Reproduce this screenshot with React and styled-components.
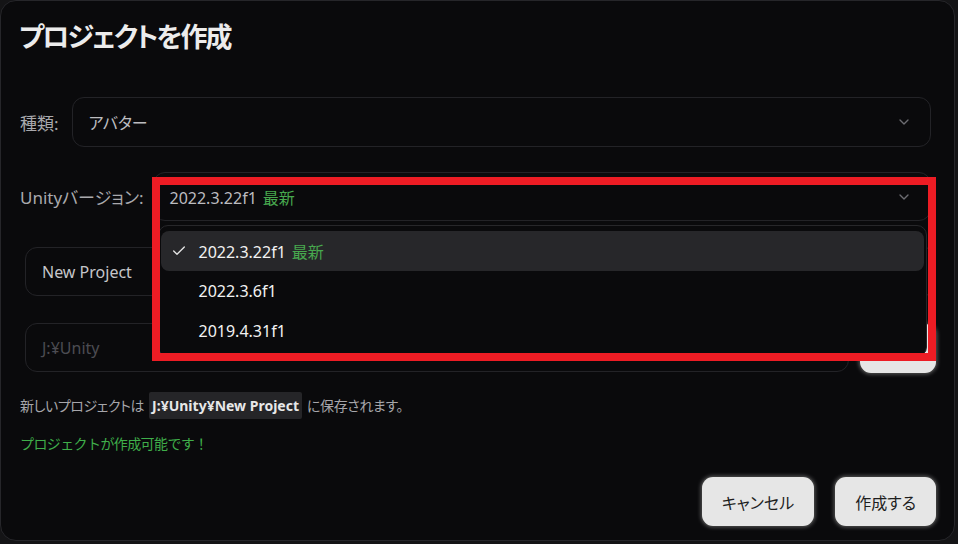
import React from 'react';
import styled, { createGlobalStyle } from 'styled-components';
import { ChevronDown, Check } from 'lucide-react';

const Global = createGlobalStyle`
  html, body {
    margin: 0;
    padding: 0;
    background: #141416;
  }
  body {
    font-family: "Noto Sans", "Noto Sans CJK JP", sans-serif;
    font-feature-settings: "palt";
  }
`;

const Dialog = styled.div`
  position: relative;
  box-sizing: border-box;
  width: 955px;
  height: 541px;
  padding: 14px 18px 0 19px;
  background: #0a0a0c;
  border: 1px solid #26262a;
  border-radius: 16px;
  display: flex;
  flex-direction: column;
`;

const Title = styled.h2`
  margin: 0 0 38px -1px;
  font-size: 27px;
  line-height: 44px;
  letter-spacing: -2px;
  font-weight: 700;
  color: #ececec;
`;

const FieldRow = styled.div`
  display: flex;
  align-items: center;
  gap: ${p => p.$gap || 10}px;
  margin-right: 5px;
  margin-bottom: ${p => p.$mb || 25}px;
`;

const Label = styled.span`
  font-size: 17px;
  color: #a9a9ad;
  white-space: nowrap;
`;

const SelectWrap = styled.div`
  position: relative;
  flex: 1;
`;

const Select = styled.div`
  box-sizing: border-box;
  height: ${p => p.$h || 50}px;
  display: flex;
  align-items: center;
  justify-content: space-between;
  padding: 0 18px 0 16px;
  border: 1px solid #232327;
  border-radius: 12px;
  font-size: 16px;
  color: #bcbcc0;
  svg {
    color: #6c6c72;
  }
`;

const Latest = styled.span`
  margin-left: 6px;
  color: #47a84e;
`;

const Menu = styled.div`
  position: absolute;
  top: calc(100% + 4px);
  left: 5px;
  right: 4px;
  box-sizing: border-box;
  padding: 5px 2px;
  background: #0a0a0c;
  border: 1px solid #27272a;
  border-radius: 10px;
  z-index: 2;
`;

const Item = styled.div`
  height: 40px;
  display: flex;
  align-items: center;
  gap: 12px;
  padding-left: 10px;
  border-radius: 8px;
  font-size: 16px;
  color: #f2f2f2;
  background: ${p => (p.$active ? '#27272a' : 'transparent')};
  svg {
    color: #e4e4e4;
    visibility: ${p => (p.$active ? 'visible' : 'hidden')};
  }
`;

const InputStack = styled.div`
  display: flex;
  flex-direction: column;
  gap: 26px;
  margin-left: 5px;
`;

const InputRow = styled.div`
  display: flex;
  align-items: center;
  gap: 11px;
`;

const Input = styled.div`
  flex: 1 1 auto;
  min-width: 0;
  box-sizing: border-box;
  height: 49px;
  display: flex;
  align-items: center;
  padding-left: 16px;
  border: 1px solid #232327;
  border-radius: 12px;
  font-size: 16px;
  color: ${p => (p.$placeholder ? '#4c4c52' : '#c6c6ca')};
`;

const Button = styled.button`
  flex: none;
  box-sizing: border-box;
  height: 49px;
  padding: 0 ${p => p.$px || 20}px;
  margin-top: ${p => p.$mt || 0}px;
  border: none;
  border-radius: 11px;
  background: #e6e6e6;
  color: #1e1e1e;
  font-family: inherit;
  font-feature-settings: "palt";
  font-size: 16px;
  box-shadow: 0 0 0 1px #3a3a3a, 0 0 4px 1px rgba(255, 255, 255, 0.35);
`;

const Info = styled.p`
  margin: 19px 0 0;
  font-size: 14px;
  line-height: 27px;
  letter-spacing: -0.4px;
  color: #a6a6aa;
`;

const Code = styled.code`
  display: inline-block;
  margin: 0 5px;
  padding: 0 3px;
  line-height: 27px;
  letter-spacing: 0;
  background: #252528;
  border-radius: 2px;
  font-family: inherit;
  font-weight: 700;
  color: #e8e8e8;
`;

const Ok = styled.p`
  margin: 15px 0 0;
  font-size: 14px;
  line-height: 20px;
  color: #3fae4a;
  font-feature-settings: normal;
  letter-spacing: -0.6px;
`;

const Actions = styled.div`
  display: flex;
  justify-content: flex-end;
  gap: 21px;
  margin-top: 23px;
`;

const Highlight = styled.div`
  position: absolute;
  left: 151px;
  top: 176px;
  width: 784px;
  height: 184px;
  box-sizing: border-box;
  border: 8px solid #ed1c24;
  z-index: 5;
  pointer-events: none;
`;

const versions = [
  { v: '2022.3.22f1', latest: true },
  { v: '2022.3.6f1' },
  { v: '2019.4.31f1' },
];

export default function App() {
  return (
    <>
      <Global />
      <Dialog>
        <Title>プロジェクトを作成</Title>

        <FieldRow $gap={13}>
          <Label>種類:</Label>
          <SelectWrap>
            <Select>
              <span>アバター</span>
              <ChevronDown size={16} strokeWidth={2} />
            </Select>
          </SelectWrap>
        </FieldRow>

        <FieldRow $mb={26} $gap={9}>
          <Label>Unityバージョン:</Label>
          <SelectWrap>
            <Select $h={49}>
              <span>
                2022.3.22f1<Latest>最新</Latest>
              </span>
              <ChevronDown size={16} strokeWidth={2} />
            </Select>
            <Menu>
              {versions.map(item => (
                <Item key={item.v} $active={item.latest}>
                  <Check size={16} strokeWidth={2} />
                  <span>
                    {item.v}
                    {item.latest && <Latest>最新</Latest>}
                  </span>
                </Item>
              ))}
            </Menu>
          </SelectWrap>
        </FieldRow>

        <InputStack>
          <Input>New Project</Input>
          <InputRow>
            <Input $placeholder>J:¥Unity</Input>
            <Button $px={22} $mt={2}>参照</Button>
          </InputRow>
        </InputStack>

        <Info>
          新しいプロジェクトは<Code>J:¥Unity¥New Project</Code>に保存されます。
        </Info>
        <Ok>プロジェクトが作成可能です！</Ok>

        <Actions>
          <Button>キャンセル</Button>
          <Button>作成する</Button>
        </Actions>

        <Highlight />
      </Dialog>
    </>
  );
}
